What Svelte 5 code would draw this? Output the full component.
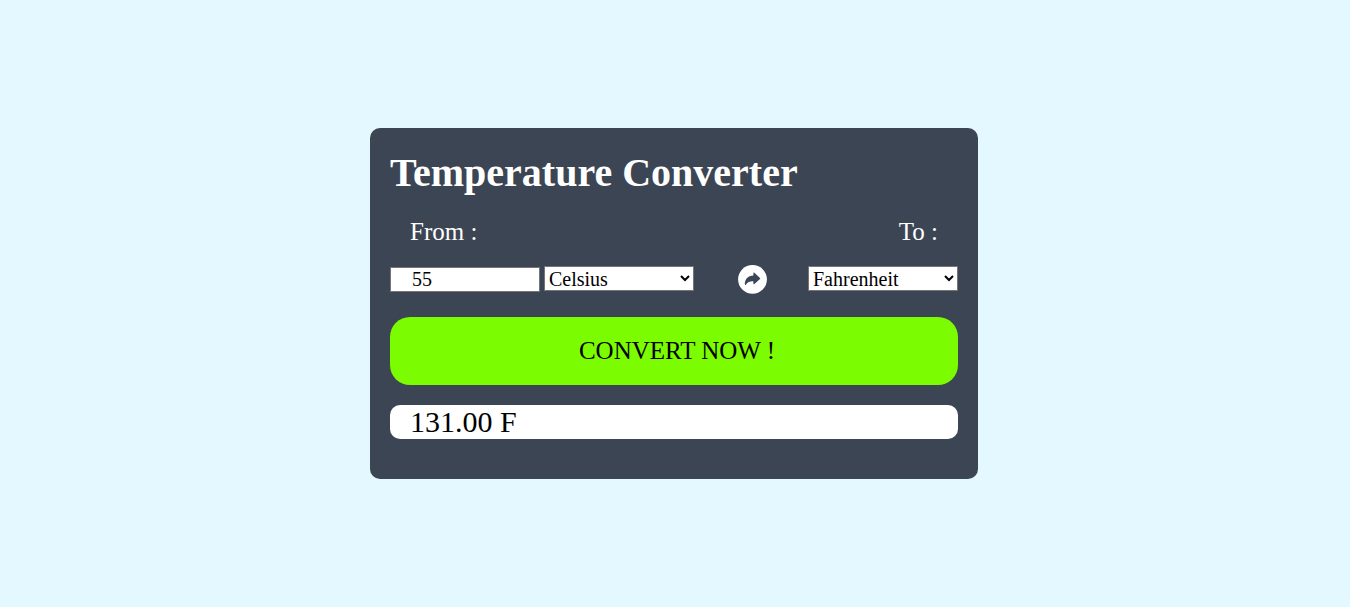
<script>
  let amount = $state('55');
  let from = $state('Celsius');
  let to = $state('Fahrenheit');
  let result = $state('131.00 F');
  const units = ['Celsius', 'Fahrenheit', 'Kelvin'];

  function convert() {
    const n = Number(amount);
    if (amount === '' || Number.isNaN(n)) return;
    const c = from === 'Celsius' ? n : from === 'Fahrenheit' ? ((n - 32) * 5) / 9 : n - 273.15;
    const out = to === 'Celsius' ? c : to === 'Fahrenheit' ? (c * 9) / 5 + 32 : c + 273.15;
    result = `${out.toFixed(2)} ${to[0]}`;
  }
</script>

<main>
  <section class="card">
    <h1>Temperature Converter</h1>
    <div class="labels"><span>From :</span><span>To :</span></div>
    <div class="fields">
      <input bind:value={amount} aria-label="Temperature" />
      <select class="from" bind:value={from} aria-label="From unit">
        {#each units as unit}<option>{unit}</option>{/each}
      </select>
      <svg class="arrow" viewBox="0 0 30 30" aria-hidden="true">
        <circle cx="15.5" cy="15.4" r="14.4" fill="#fff" />
        <path d="M16.4 9.1Q16.6 8.2 17.4 8.8L23 13.9Q23.6 14.5 23 15.1L17.4 20.1Q16.4 20.8 16.4 19.7V17.4C12.9 17.2 10.8 18.1 9 20.4Q7.9 21.6 7.8 20.1C7.9 15.2 10.9 11.9 16.4 11.6Z" fill="#3c4553" />
      </svg>
      <select bind:value={to} aria-label="To unit">
        {#each units as unit}<option>{unit}</option>{/each}
      </select>
    </div>
    <button onclick={convert}>CONVERT NOW !</button>
    <output>{result}</output>
  </section>
</main>

<style>
  :global(body) {
    background: #e3f8ff;
    font-family: "Liberation Serif", "Times New Roman", serif;
  }
  main {
    height: 607px;
    display: flex;
    justify-content: center;
    align-items: flex-start;
    padding: 128px 2px 0 0;
    box-sizing: border-box;
  }
  .card {
    box-sizing: border-box;
    width: 608px;
    height: 351px;
    padding: 20px;
    border-radius: 10px;
    background: #3c4553;
    color: #fff;
  }
  h1 {
    margin: 2px 0 0;
    font-size: 40px;
    line-height: 46px;
    white-space: nowrap;
  }
  .labels {
    display: flex;
    justify-content: space-between;
    margin: 21px 20px 0;
    font-size: 25px;
    line-height: 29px;
  }
  .fields {
    display: flex;
    align-items: flex-start;
    height: 29px;
    margin-top: 20px;
  }
  input,
  select {
    box-sizing: border-box;
    width: 150px;
    height: 25px;
    margin: 0;
    border: 1px solid #767676;
    border-radius: 0;
    background: #fff;
    color: #000;
    font: 20px "Liberation Serif", "Times New Roman", serif;
    outline: none;
  }
  select {
    margin-top: 0;
    padding: 0;
  }
  input {
    margin: 1px 4px 0 0;
    padding: 0 0 0 21px;
  }
  .arrow {
    width: 30px;
    height: 30px;
    margin: -2px 41px 0 43px;
    flex: none;
  }
  button {
    display: block;
    width: 568px;
    height: 68px;
    margin: 22px 0 20px;
    padding: 0 0 0 6px;
    border: 0;
    border-radius: 20px;
    background: #7cfc00;
    color: #000;
    font: 25px "Liberation Serif", "Times New Roman", serif;
  }
  output {
    display: block;
    height: 34px;
    padding-left: 20px;
    border-radius: 10px;
    background: #fff;
    color: #000;
    font-size: 30px;
    line-height: 34px;
  }
</style>
